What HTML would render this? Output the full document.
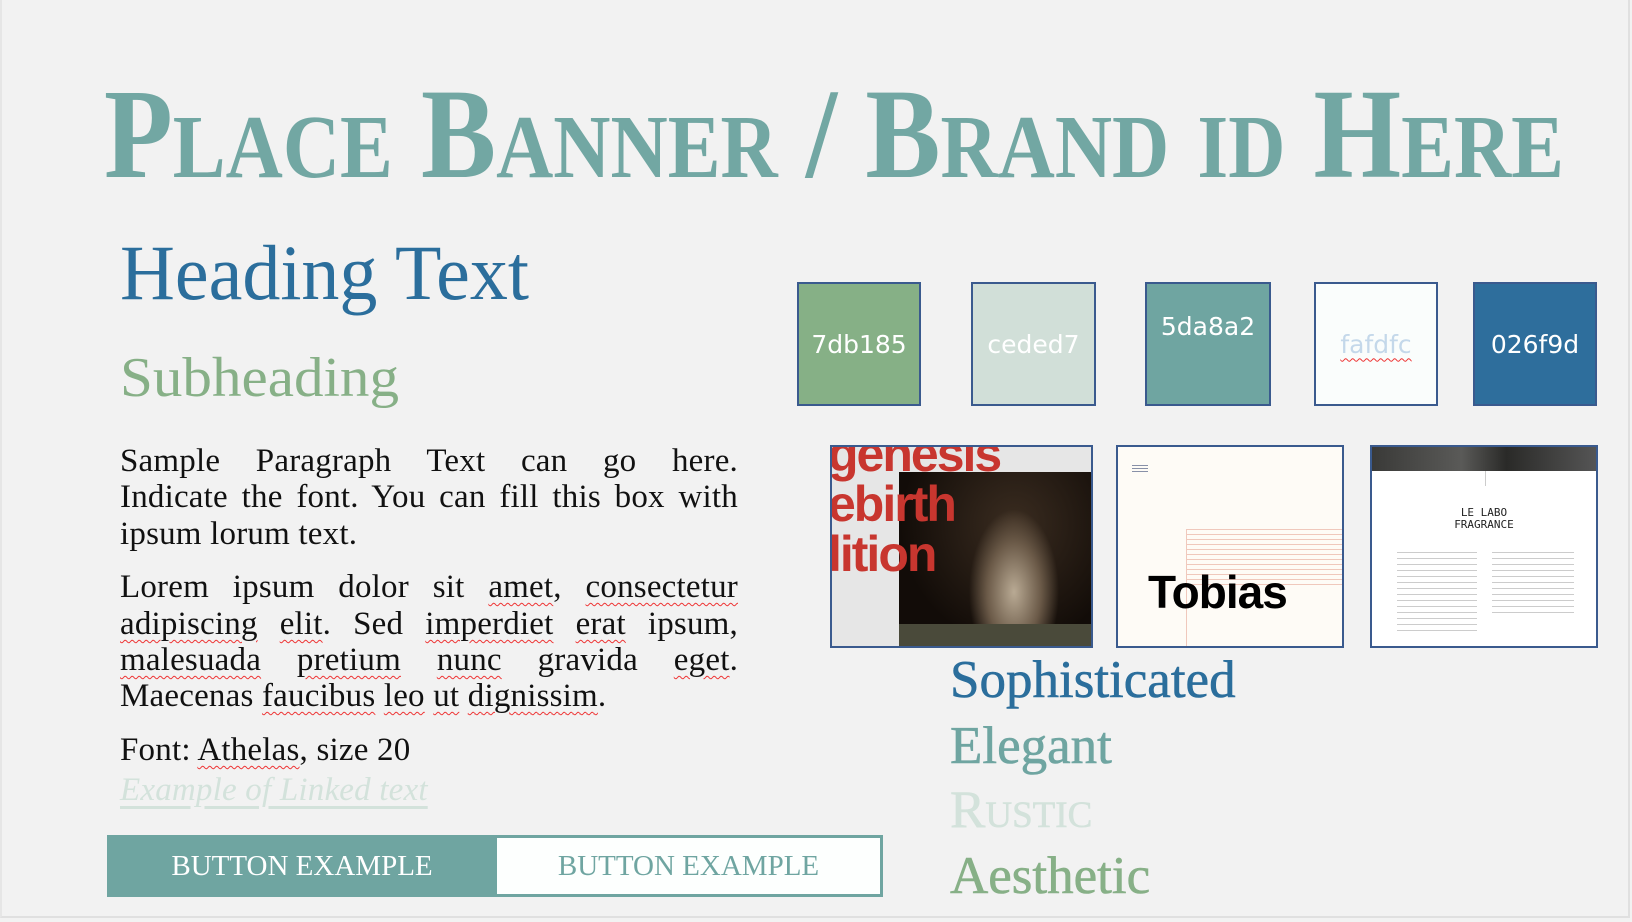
<!DOCTYPE html>
<html><head><meta charset="utf-8"><style>
*{margin:0;padding:0;box-sizing:border-box}
body{width:1632px;height:922px;background:#f2f2f2;position:relative;overflow:hidden;font-family:"Liberation Serif",serif}
.frame{position:absolute;left:0;top:0;width:1630px;height:918px;border:2px solid #e0e0e0;border-top:none;border-left:2px solid #e6e6e6}
.ln{position:absolute;left:120px;width:618px;font-size:33px;letter-spacing:0.2px;color:#111;white-space:nowrap}
.j{text-align:justify;text-align-last:justify}
.sq{text-decoration:underline wavy #e33;text-decoration-thickness:1px;text-underline-offset:5px}
.sw{position:absolute;top:282px;height:124px;border:2px solid #3a5a8e;color:#fff;font-family:"DejaVu Sans",sans-serif;font-size:25px;display:flex;align-items:center;justify-content:center}
.im{position:absolute;top:445px;height:203px;border:2px solid #3a5a8e;overflow:hidden}
.w{position:absolute;left:950px;font-size:53px;-webkit-text-stroke:0.6px currentColor}
</style></head><body>
<div class="frame"></div>
<svg width="1632" height="922" style="position:absolute;left:0;top:0">
<text x="104" y="177" textLength="1460" lengthAdjust="spacingAndGlyphs" font-family="Liberation Serif" font-weight="bold" font-size="128" fill="#72a7a3" style="font-variant:small-caps">Place Banner / Brand id Here</text>
<text x="120" y="299" textLength="409" lengthAdjust="spacingAndGlyphs" font-family="Liberation Serif" font-size="78" fill="#2b6e9c">Heading Text</text>
<text x="120" y="396" textLength="279" lengthAdjust="spacingAndGlyphs" font-family="Liberation Serif" font-size="56" fill="#87b087">Subheading</text>
</svg>
<div class="ln j" style="top:443px">Sample Paragraph Text can go here.</div>
<div class="ln j" style="top:479px">Indicate the font. You can fill this box with</div>
<div class="ln" style="top:516px">ipsum lorum text.</div>
<div class="ln j" style="top:569px">Lorem ipsum dolor sit <span class="sq">amet</span>, <span class="sq">consectetur</span></div>
<div class="ln j" style="top:606px"><span class="sq">adipiscing</span> <span class="sq">elit</span>. Sed <span class="sq">imperdiet</span> <span class="sq">erat</span> ipsum,</div>
<div class="ln j" style="top:642px"><span class="sq">malesuada</span> <span class="sq">pretium</span> <span class="sq">nunc</span> gravida <span class="sq">eget</span>.</div>
<div class="ln" style="top:678px">Maecenas <span class="sq">faucibus</span> <span class="sq">leo</span> <span class="sq">ut</span> <span class="sq">dignissim</span>.</div>
<div class="ln" style="top:732px">Font: <span class="sq">Athelas</span>, size 20</div>
<div class="ln" style="top:772px;font-style:italic;color:#d3e2db;text-decoration:underline;text-underline-offset:6px">Example of Linked text</div>
<div style="position:absolute;left:107px;top:835px;width:390px;height:62px;background:#6fa5a1;color:#fff;font-size:29px;display:flex;align-items:center;justify-content:center">BUTTON EXAMPLE</div>
<div style="position:absolute;left:497px;top:835px;width:386px;height:62px;background:#fdfffe;border:3px solid #6fa5a1;border-left:none;color:#6fa5a1;font-size:29px;display:flex;align-items:center;justify-content:center">BUTTON EXAMPLE</div>

<div class="sw" style="left:797px;width:124px;background:#86b086">7db185</div>
<div class="sw" style="left:971px;width:125px;background:#d1dfd8">ceded7</div>
<div class="sw" style="left:1145px;width:126px;background:#6fa5a1;align-items:flex-start;padding-top:28px">5da8a2</div>
<div class="sw" style="left:1314px;width:124px;background:#fafdfc;color:#c4d8ea"><span class="sq">fafdfc</span></div>
<div class="sw" style="left:1473px;width:124px;background:#2e6e9c">026f9d</div>

<div class="im" style="left:830px;width:263px;background:#e6e6e6">
 <div style="position:absolute;left:67px;top:25px;right:0;bottom:0;background:radial-gradient(ellipse 60px 110px at 115px 120px,#b9aa94 0%,#6b5a48 45%,transparent 75%),radial-gradient(ellipse at 60% 30%,#3a2c20,#120c08 70%)"></div>
 <div style="position:absolute;left:67px;right:0;bottom:0;height:22px;background:#4a4a3a"></div>
 <div style="position:absolute;left:-4px;top:-18px;font-family:'Liberation Sans',sans-serif;font-weight:bold;font-size:50px;line-height:50px;color:#c8362f;letter-spacing:-2px">genesis<br>ebirth<br>lition</div>
</div>
<div class="im" style="left:1116px;width:228px;background:#fefbf6">
 <div style="position:absolute;left:14px;top:18px;width:16px;height:7px;border-top:1px solid #8890a8;border-bottom:1px solid #8890a8"></div>
 <div style="position:absolute;left:14px;top:21px;width:16px;border-top:1px solid #8890a8"></div>
 <div style="position:absolute;left:68px;top:82px;right:0;height:58px;background:repeating-linear-gradient(#f0c8bc 0 1px,transparent 1px 5px)"></div>
 <div style="position:absolute;left:68px;top:82px;bottom:0;border-left:1px solid #f0c8bc"></div>
 <div style="position:absolute;left:30px;top:118px;font-family:'Liberation Sans',sans-serif;font-weight:bold;font-size:46px;color:#000;letter-spacing:-1px">Tobias</div>
</div>
<div class="im" style="left:1370px;width:228px;background:#fff">
 <div style="position:absolute;left:0;top:0;right:0;height:24px;background:linear-gradient(90deg,#3a3a38,#5a5a58 40%,#2a2a28 60%,#555)"></div>
 <div style="position:absolute;left:113px;top:24px;height:15px;border-left:1px solid #ccc"></div>
 <div style="position:absolute;left:0;right:0;top:60px;text-align:center;font-family:'DejaVu Sans Mono',monospace;font-size:11px;line-height:12px;color:#222">LE LABO<br>FRAGRANCE</div>
 <div style="position:absolute;left:25px;top:105px;width:80px;height:80px;background:repeating-linear-gradient(#ccc 0 1px,transparent 1px 6px)"></div>
 <div style="position:absolute;left:120px;top:105px;width:82px;height:62px;background:repeating-linear-gradient(#ccc 0 1px,transparent 1px 6px)"></div>
</div>

<div class="w" style="top:650px;color:#2b6e9c">Sophisticated</div>
<div class="w" style="top:716px;color:#6fa5a1">Elegant</div>
<div class="w" style="top:780px;color:#d3e2db;font-variant:small-caps">Rustic</div>
<div class="w" style="top:846px;color:#87b087">Aesthetic</div>
</body></html>
